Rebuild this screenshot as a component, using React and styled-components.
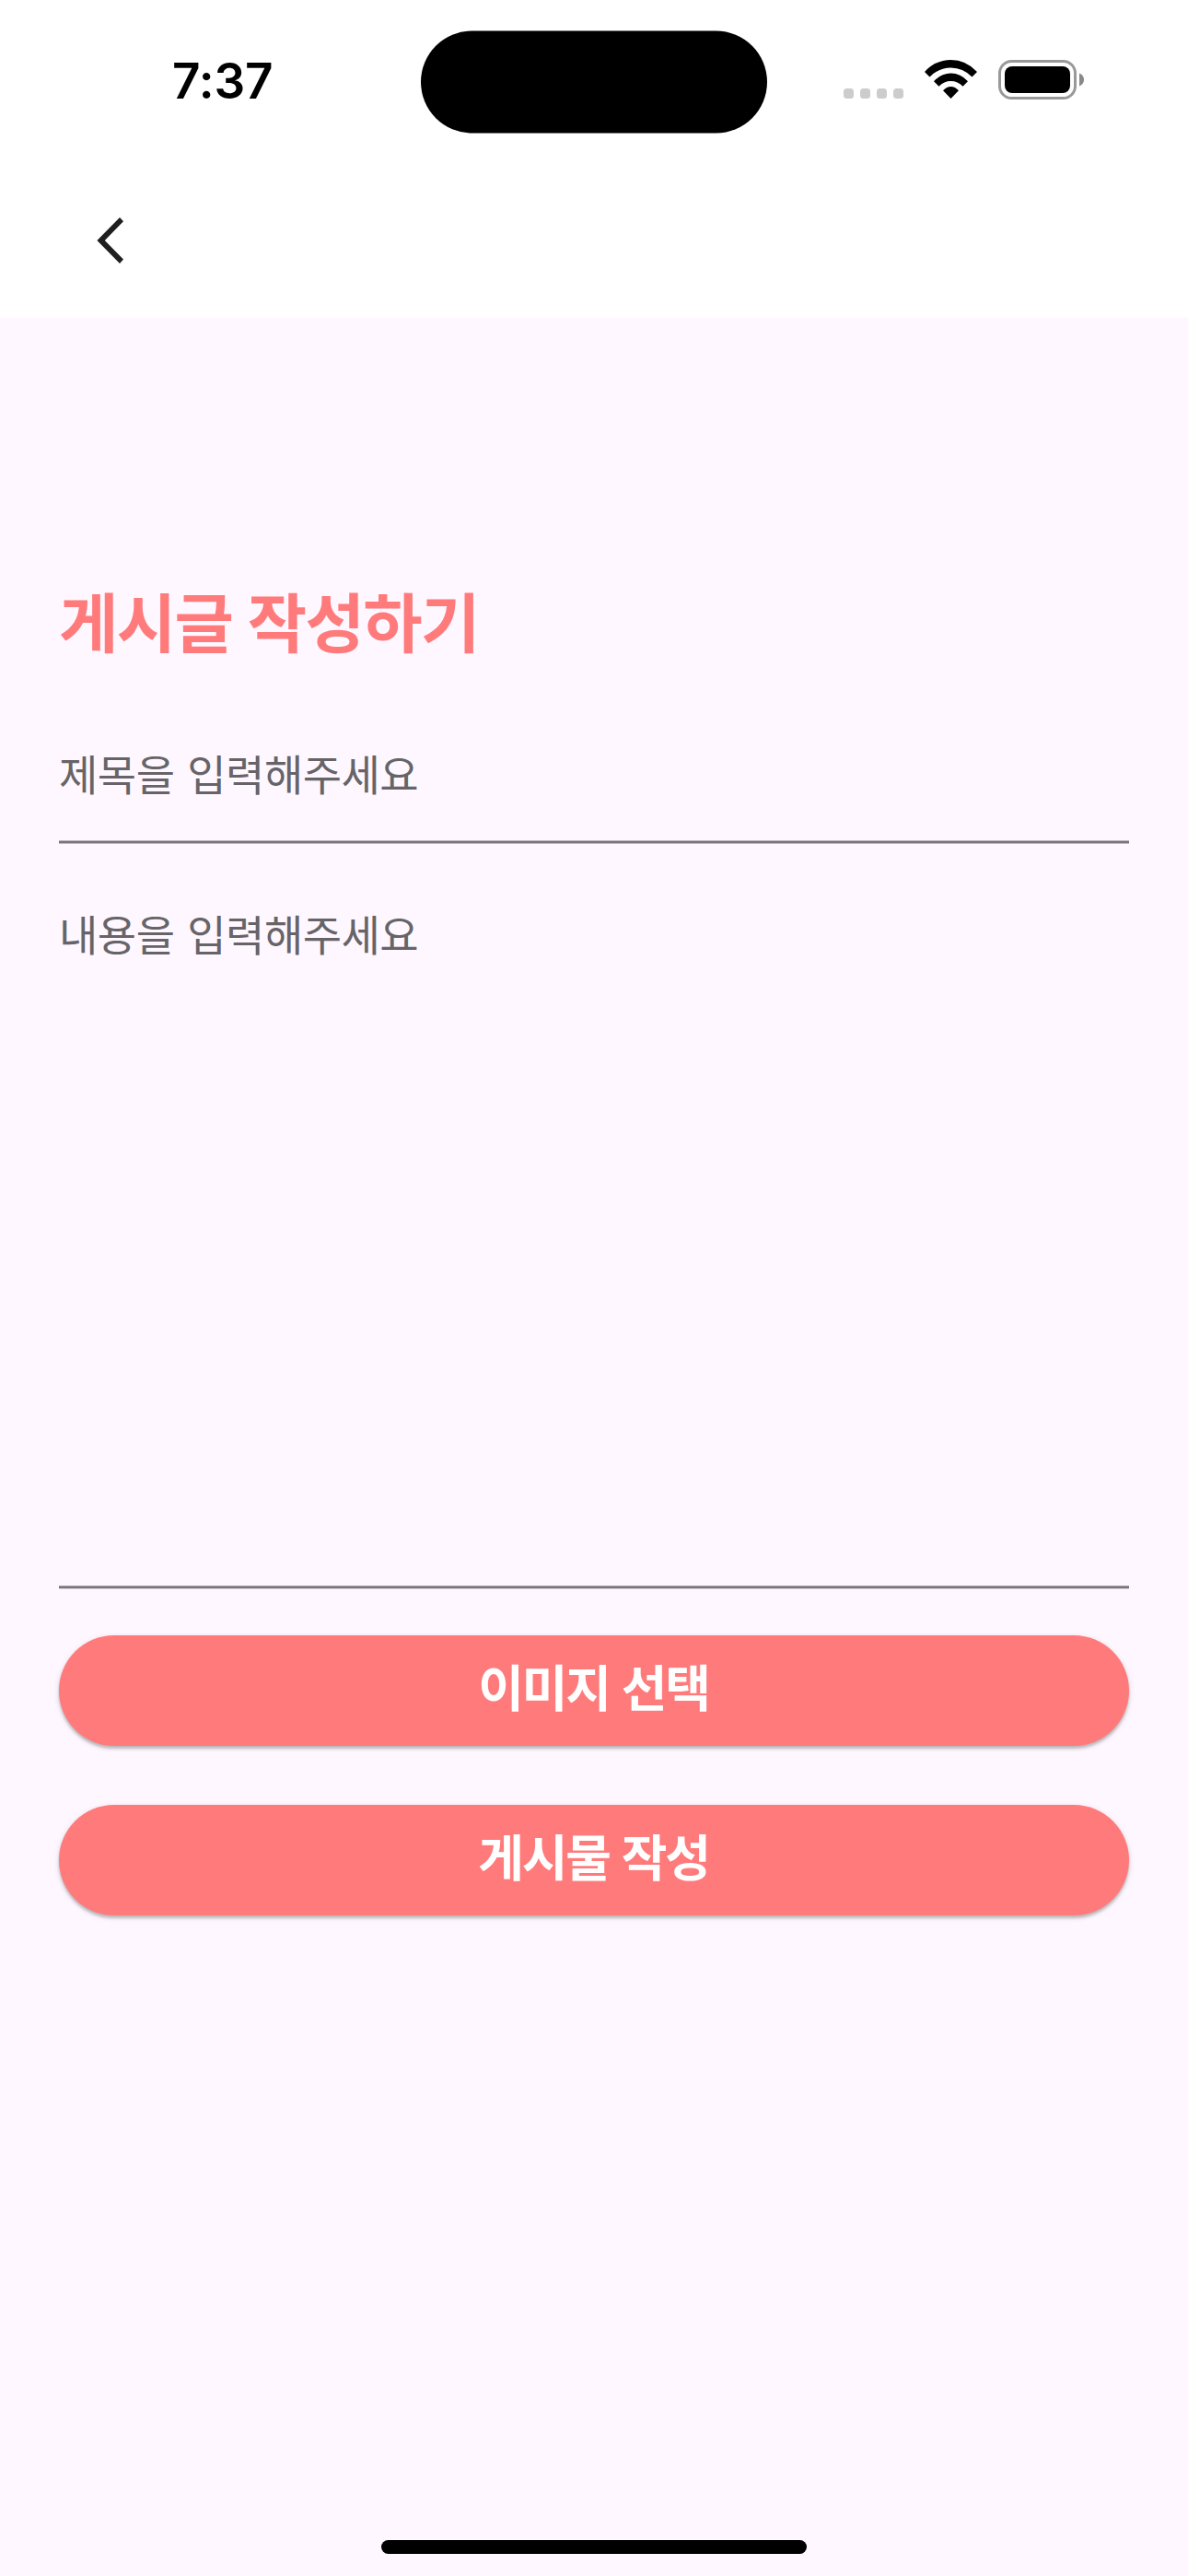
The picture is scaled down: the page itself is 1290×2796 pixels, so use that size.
import React from "react";
import styled, { createGlobalStyle } from "styled-components";

const GlobalStyle = createGlobalStyle`
  *, *::before, *::after { box-sizing: border-box; }
  body { margin: 0; background: #fef7ff; }
`;

const koreanStack = `"Noto Sans CJK KR", "Noto Sans", sans-serif`;

const Screen = styled.div`
  display: flex;
  flex-direction: column;
  width: 1290px;
  height: 2796px;
  overflow: hidden;
  background: #fef7ff;
  font-family: ${koreanStack};
`;

const StatusBar = styled.header`
  display: grid;
  grid-template-columns: 457px 376px 457px;
  height: 177px;
  padding-top: 33px;
  background: #fff;
`;

const Clock = styled.time`
  padding: 24px 0 0 187px;
  font-family: Inter, sans-serif;
  font-size: 53px;
  font-weight: 600;
  line-height: 63px;
  letter-spacing: -0.1px;
  color: #000;
`;

const Island = styled.div`
  height: 111px;
  border-radius: 56px;
  background: #000;
  transform: translateY(0.5px);
`;

const Indicators = styled.div`
  display: flex;
  align-items: flex-start;
  padding: 32px 0 0 83px;
`;

const SignalDots = styled.div`
  display: flex;
  gap: 7px;
  margin: 31px 23px 0 0;
`;

const Dot = styled.i`
  width: 11px;
  height: 11px;
  border-radius: 3.5px;
  background: #ccc;
`;

const WifiIcon = styled.svg`
  display: block;
  width: 57px;
  height: 43px;
  margin-right: 23px;
`;

const BatteryIcon = styled.svg`
  display: block;
  width: 94px;
  height: 43px;
`;

const AppBar = styled.nav`
  display: flex;
  height: 168px;
  padding: 48px 0 0 84px;
  background: #fff;
`;

const BackButton = styled.button`
  display: flex;
  align-items: center;
  justify-content: center;
  width: 72px;
  height: 72px;
  padding: 0;
  border: 0;
  background: none;
`;

const Form = styled.main`
  display: flex;
  flex-direction: column;
  flex: 1;
  padding: 275px 64px 0;
`;

const Title = styled.h1`
  margin: 0;
  height: 106px;
  font-size: 70px;
  font-weight: 700;
  line-height: 106px;
  letter-spacing: -1.6px;
  word-spacing: 2px;
  color: #ff7b7b;
`;

const Field = styled.label`
  display: flex;
  flex-direction: column;
  justify-content: space-between;
  height: ${(p) => p.$height}px;
  margin-top: ${(p) => p.$gap}px;
`;

const Hint = styled.span`
  font-size: 46px;
  line-height: 68px;
  letter-spacing: -0.5px;
  word-spacing: 4px;
  color: #676468;
`;

const Underline = styled.span`
  height: 4px;
  background: #79747e;
  border-top: 1px solid ${(p) => p.$top};
  border-bottom: 1px solid ${(p) => p.$bottom};
`;

const Actions = styled.div`
  display: flex;
  flex-direction: column;
  gap: 64px;
  margin-top: 50px;
`;

const PillButton = styled.button`
  height: 120px;
  padding: 0 1px 11px 0;
  border: 0;
  border-radius: 60px;
  background: #ff7b7b;
  box-shadow: 0 3px 3px rgba(0, 0, 0, 0.18), 0 2px 6px rgba(0, 0, 0, 0.14);
  font-family: ${koreanStack};
  font-size: 54px;
  font-weight: 700;
  line-height: 80px;
  letter-spacing: -2.2px;
  word-spacing: 3px;
  color: #fff;
`;

const HomeIndicator = styled.div`
  align-self: center;
  width: 462px;
  height: 15px;
  margin-bottom: 24px;
  border-radius: 8px;
  background: #000;
`;

export default function App() {
  return (
    <>
      <GlobalStyle />
      <Screen>
        <StatusBar>
          <Clock>7:37</Clock>
          <Island />
          <Indicators>
            <SignalDots>
              <Dot />
              <Dot />
              <Dot />
              <Dot />
            </SignalDots>
            <WifiIcon viewBox="0 0 57 43">
              <path d="M0 13 Q12 0 28.5 0 Q45 0 57 13 L51.5 18.5 Q41.500 8.500 28.500 8.500 Q15.500 8.500 5.500 18.500 Z" />
              <path d="M10 23.200 Q18 14.500 28.500 14.500 Q39 14.500 47 23.200 L41.500 28.800 Q36 23 28.500 23 Q21 23 15.500 28.800 Z" />
              <path d="M20 33.300 Q24 29 28.500 29 Q33 29 37 33.300 L28.500 42 Z" />
            </WifiIcon>
            <BatteryIcon viewBox="0 0 94 43">
              <rect x="1.5" y="1.500" width="82" height="40" rx="13" fill="none" stroke="#999" strokeWidth="3" />
              <rect x="7" y="7" width="71" height="29" rx="8" fill="#000" />
              <path d="M88 14.500 C91.500 16 93 18.500 93 21.500 C93 24.500 91.500 27 88 28.500 Z" fill="#888" />
            </BatteryIcon>
          </Indicators>
        </StatusBar>
        <AppBar>
          <BackButton aria-label="뒤로">
            <svg width="72" height="72" viewBox="84 225 72 72">
              <path d="M130 236 L134 240.200 L113.800 261 L134 281.600 L130 286 L105.400 261 Z" fill="#1f1f1f" />
            </svg>
          </BackButton>
        </AppBar>
        <Form>
          <Title>게시글 작성하기</Title>
          <Field $height={112} $gap={78}>
            <Hint>제목을 입력해주세요</Hint>
            <Underline $top="#bbb5bf" $bottom="#bbb5bf" />
          </Field>
          <Field $height={747} $gap={62}>
            <Hint>내용을 입력해주세요</Hint>
            <Underline $top="#a19ba6" $bottom="#ddd6df" />
          </Field>
          <Actions>
            <PillButton type="button">이미지 선택</PillButton>
            <PillButton type="button">게시물 작성</PillButton>
          </Actions>
        </Form>
        <HomeIndicator />
      </Screen>
    </>
  );
}
